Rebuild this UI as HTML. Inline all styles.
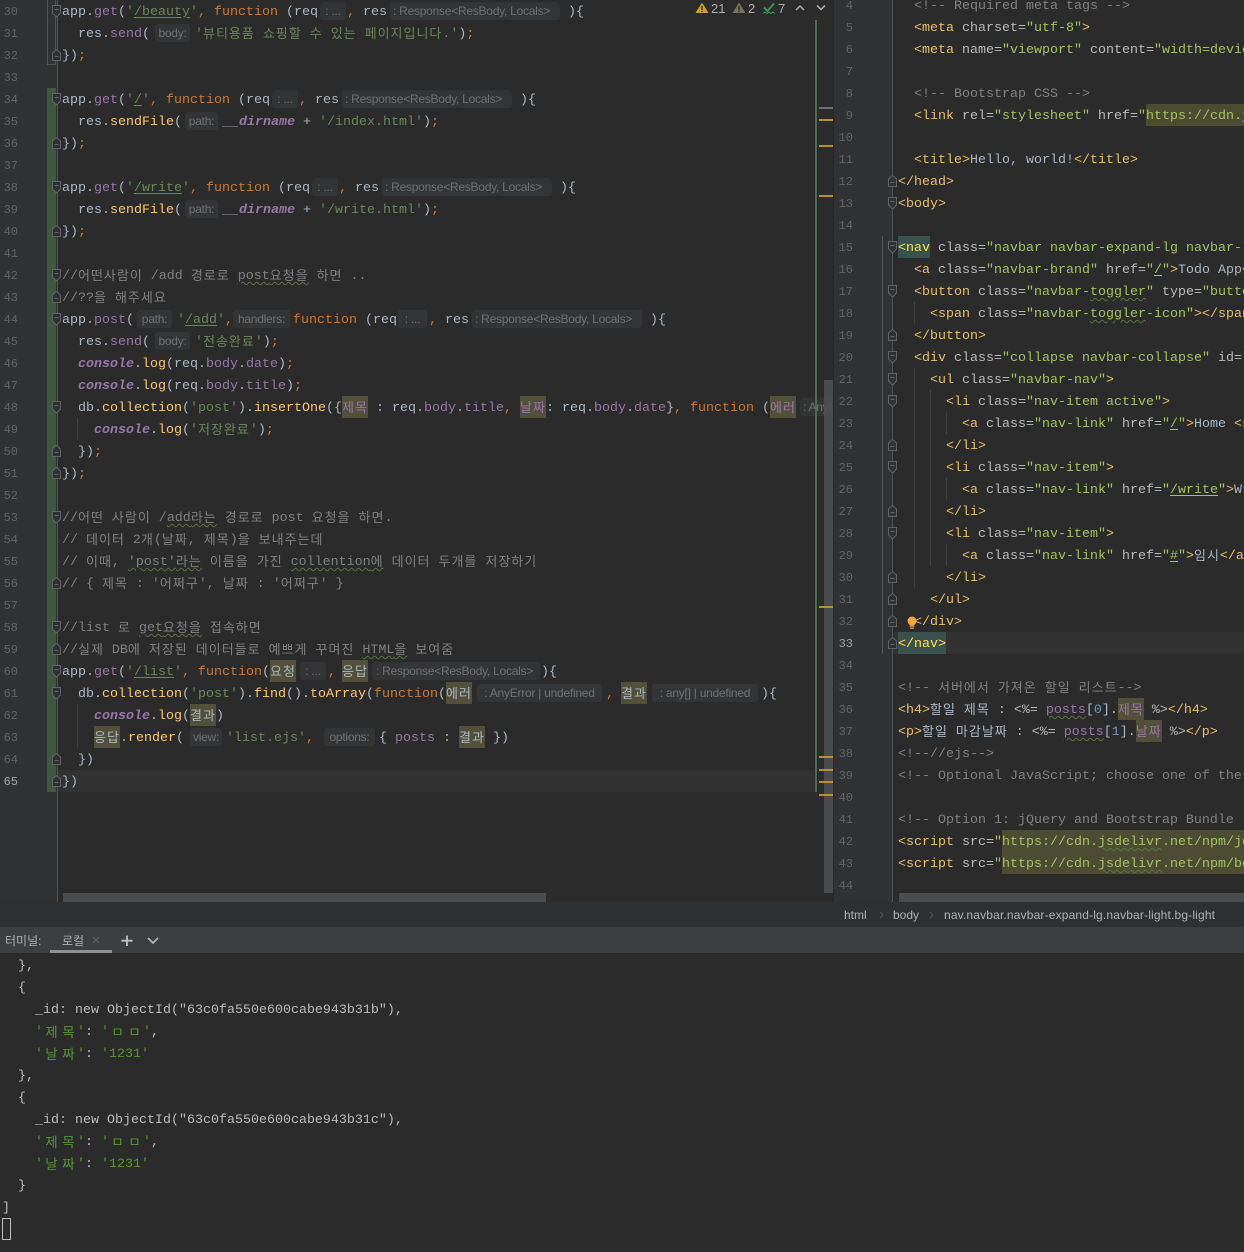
<!DOCTYPE html>
<html lang="ko"><head><meta charset="utf-8"><title>IDE</title>
<style>
html,body{margin:0;padding:0;background:#2b2b2b;width:1244px;height:1252px;overflow:hidden}
#ov{position:absolute;left:0;top:0;z-index:3;pointer-events:none}
.pane{position:absolute;overflow:hidden}
.bg{position:absolute}
.l{position:absolute;white-space:pre;height:22px;line-height:26px;font-family:"Liberation Mono","Noto Sans CJK KR",monospace;font-size:13.334px;color:#a9b7c6}
b{font-weight:normal;font-family:"Noto Sans CJK KR","Liberation Mono",sans-serif;font-size:13px;letter-spacing:1px;line-height:1;position:relative;top:1px}
.o{color:#cc7832}.g{color:#6a8759}.y{color:#ffc66d}.p{color:#9876aa}.v{color:#9876aa;font-style:italic;font-weight:bold}
.c{color:#808080}.t{color:#e8bf6a}.a{color:#bababa}.s{color:#a5c261}.d{color:#6897bb}
.u{text-decoration:underline;text-underline-offset:2px}
.w{text-decoration:underline wavy #5b7340 1px;text-underline-offset:2px}
mark{display:inline-block;width:26px;height:22px;vertical-align:top;background:#52503a;color:inherit;text-align:center}
.url{display:inline-block;height:22px;vertical-align:top;background:#4c4c32}
i.h{display:inline-block;box-sizing:border-box;height:18px;margin-top:2px;vertical-align:top;line-height:18px;background:#323436;border-radius:3px;font:normal 12px/18px "Liberation Sans",sans-serif;color:#6f7173;text-align:center;overflow:hidden;letter-spacing:-.25px}
i.q{width:26px;margin-left:2px;margin-right:1px}
i.r{width:170px;margin-left:3px;margin-right:8px;text-align:left;padding-left:3px}
i.b{width:35px;margin-left:5px;margin-right:5px}
i.f{width:33px;margin-left:3px;margin-right:5px}
.tm{color:#bbbbbb}.tg{color:#5a9432}
.wc{display:inline-block;width:17px;height:13px;line-height:13px;text-align:center;font-family:"Noto Sans CJK KR",sans-serif;font-size:13.5px;vertical-align:-2px}
</style></head><body>

<!-- backgrounds -->
<div class="bg" style="left:0;top:0;width:57px;height:902px;background:#303234"></div>
<div class="bg" style="left:833px;top:0;width:59px;height:902px;background:#303234"></div>
<div class="bg" style="left:57px;top:770px;width:758px;height:22px;background:#323232"></div>
<div class="bg" style="left:893px;top:632px;width:351px;height:22px;background:#323232"></div>
<div class="bg" style="left:47px;top:88px;width:9px;height:704px;background:#3f583f"></div>
<div class="bg" style="left:47px;top:0;width:9px;height:65px;border:1px solid #4a5a48;border-top:0;box-sizing:border-box"></div>
<div class="bg" style="left:0;top:902px;width:1244px;height:25px;background:#2e3133"></div>
<div class="bg" style="left:0;top:927px;width:1244px;height:26px;background:#3c3f41"></div>

<!-- LEFT EDITOR -->
<div class="pane" style="left:0;top:0;width:833px;height:902px">
<div class="l" style="left:62px;top:0">app.<span class="p">get</span>(<span class="g">'<span class="u">/beauty</span>'</span><span class="o">, function </span>(req<i class="h q">: ...</i><span class="o">,</span> res<i class="h r">: Response&lt;ResBody, Locals&gt;</i>){</div>
<div class="l" style="left:78px;top:22px">res.<span class="p">send</span>(<i class="h b">body:</i><span class="g">'<b>뷰티용품</b> <b>쇼핑할</b> <b>수</b> <b>있는</b> <b>페이지입니다</b>.'</span>)<span class="o">;</span></div>
<div class="l" style="left:62px;top:44px">})<span class="o">;</span></div>

<div class="l" style="left:62px;top:88px">app.<span class="p">get</span>(<span class="g">'<span class="u">/</span>'</span><span class="o">, function </span>(req<i class="h q">: ...</i><span class="o">,</span> res<i class="h r">: Response&lt;ResBody, Locals&gt;</i>){</div>
<div class="l" style="left:78px;top:110px">res.<span class="y">sendFile</span>(<i class="h f">path:</i><span class="v">__dirname</span> + <span class="g">'/index.html'</span>)<span class="o">;</span></div>
<div class="l" style="left:62px;top:132px">})<span class="o">;</span></div>

<div class="l" style="left:62px;top:176px">app.<span class="p">get</span>(<span class="g">'<span class="u">/write</span>'</span><span class="o">, function </span>(req<i class="h q">: ...</i><span class="o">,</span> res<i class="h r">: Response&lt;ResBody, Locals&gt;</i>){</div>
<div class="l" style="left:78px;top:198px">res.<span class="y">sendFile</span>(<i class="h f">path:</i><span class="v">__dirname</span> + <span class="g">'/write.html'</span>)<span class="o">;</span></div>
<div class="l" style="left:62px;top:220px">})<span class="o">;</span></div>

<div class="l c" style="left:62px;top:264px">//<b>어떤사람이</b> /add <b>경로로</b> <span class="w">post<b>요청을</b></span> <b>하면</b> ..</div>
<div class="l c" style="left:62px;top:286px">//??<b>을</b> <b>해주세요</b></div>
<div class="l" style="left:62px;top:308px">app.<span class="p">post</span>(<i class="h" style="width:35px;margin-left:3px;margin-right:5px">path:</i><span class="g">'<span class="u">/add</span>'</span><span class="o">,</span><i class="h" style="width:57px;margin-right:3px">handlers:</i><span class="o">function </span>(req<i class="h" style="width:29px;margin-left:1px;margin-right:2px">: ...</i><span class="o">,</span> res<i class="h r">: Response&lt;ResBody, Locals&gt;</i>){</div>
<div class="l" style="left:78px;top:330px">res.<span class="p">send</span>(<i class="h b">body:</i><span class="g">'<b>전송완료</b>'</span>)<span class="o">;</span></div>
<div class="l" style="left:78px;top:352px"><span class="v">console</span>.<span class="y">log</span>(req.<span class="p">body</span>.<span class="p">date</span>)<span class="o">;</span></div>
<div class="l" style="left:78px;top:374px"><span class="v">console</span>.<span class="y">log</span>(req.<span class="p">body</span>.<span class="p">title</span>)<span class="o">;</span></div>
<div class="l" style="left:78px;top:396px">db.<span class="y">collection</span>(<span class="g">'post'</span>).<span class="y">insertOne</span>({<mark class="p"><b>제목</b></mark> : req.<span class="p">body</span>.<span class="p">title</span><span class="o">,</span> <mark class="p"><b>날짜</b></mark>: req.<span class="p">body</span>.<span class="p">date</span>}<span class="o">, function </span>(<mark class="p"><b>에러</b></mark><i class="h" style="width:60px;margin-left:4px;text-align:left;padding-left:3px">: AnyError</i></div>
<div class="l" style="left:94px;top:418px"><span class="v">console</span>.<span class="y">log</span>(<span class="g">'<b>저장완료</b>'</span>)<span class="o">;</span></div>
<div class="l" style="left:78px;top:440px">})<span class="o">;</span></div>
<div class="l" style="left:62px;top:462px">})<span class="o">;</span></div>

<div class="l c" style="left:62px;top:506px">//<b>어떤</b> <b>사람이</b> /<span class="w">add<b>라는</b></span> <b>경로로</b> post <b>요청을</b> <b>하면</b>.</div>
<div class="l c" style="left:62px;top:528px">// <b>데이터</b> 2<b>개</b>(<b>날짜</b>, <b>제목</b>)<b>을</b> <b>보내주는데</b></div>
<div class="l c" style="left:62px;top:550px">// <b>이때</b>, <span class="w">'post'<b>라는</b></span> <b>이름을</b> <b>가진</b> <span class="w">collention<b>에</b></span> <b>데이터</b> <b>두개를</b> <b>저장하기</b></div>
<div class="l c" style="left:62px;top:572px">// { <b>제목</b> : '<b>어쩌구</b>', <b>날짜</b> : '<b>어쩌구</b>' }</div>

<div class="l c" style="left:62px;top:616px">//list <b>로</b> <span class="w">get<b>요청을</b></span> <b>접속하면</b></div>
<div class="l c" style="left:62px;top:638px">//<b>실제</b> DB<b>에</b> <b>저장된</b> <b>데이터들로</b> <b>예쁘게</b> <b>꾸며진</b> <span class="w">HTML<b>을</b></span> <b>보여줌</b></div>
<div class="l" style="left:62px;top:660px">app.<span class="p">get</span>(<span class="g">'<span class="u">/list</span>'</span><span class="o">, function</span>(<mark><b>요청</b></mark><i class="h" style="width:26px;margin-left:4px;margin-right:2px">: ...</i><span class="o">,</span> <mark style="margin-left:-2px"><b>응답</b></mark><i class="h" style="width:168px;margin-left:4px;margin-right:1px;text-align:left;padding-left:4px">: Response&lt;ResBody, Locals&gt;</i>){</div>
<div class="l" style="left:78px;top:682px">db.<span class="y">collection</span>(<span class="g">'post'</span>).<span class="y">find</span>().<span class="y">toArray</span>(<span class="o">function</span>(<mark><b>에러</b></mark><i class="h" style="width:125px;margin-left:5px;margin-right:4px">: AnyError | undefined</i><span class="o">,</span> <mark style="margin-left:-1px"><b>결과</b></mark><i class="h" style="width:106px;margin-left:5px;margin-right:3px">: any[] | undefined</i>){</div>
<div class="l" style="left:94px;top:704px"><span class="v">console</span>.<span class="y">log</span>(<mark><b>결과</b></mark>)</div>
<div class="l" style="left:94px;top:726px"><mark><b>응답</b></mark>.<span class="y">render</span>(<i class="h" style="width:32px;margin-left:6px;margin-right:4px">view:</i><span class="g">'list.ejs'</span><span class="o">,</span><i class="h" style="width:51px;margin-left:10px;margin-right:4px">options:</i>{ <span class="p">posts</span> : <mark><b>결과</b></mark> })</div>
<div class="l" style="left:78px;top:748px">})</div>
<div class="l" style="left:62px;top:770px">})</div>
</div>

<!-- RIGHT EDITOR -->
<div class="pane" style="left:0;top:0;width:1244px;height:893px">
<div class="l c" style="left:914px;top:-6px">&lt;!-- Required meta tags --&gt;</div>
<div class="l" style="left:914px;top:16px"><span class="t">&lt;meta</span> <span class="a">charset=</span><span class="s">"utf-8"</span><span class="t">&gt;</span></div>
<div class="l" style="left:914px;top:38px"><span class="t">&lt;meta</span> <span class="a">name=</span><span class="s">"viewport"</span> <span class="a">content=</span><span class="s">"width=device-width, initial-scale=1"</span><span class="t">&gt;</span></div>
<div class="l c" style="left:914px;top:82px">&lt;!-- Bootstrap CSS --&gt;</div>
<div class="l" style="left:914px;top:104px"><span class="t">&lt;link</span> <span class="a">rel=</span><span class="s">"stylesheet"</span> <span class="a">href=</span><span class="s">"<span class="url">https://cdn.jsdelivr.net/npm/bootstrap</span></span></div>
<div class="l" style="left:914px;top:148px"><span class="t">&lt;title&gt;</span>Hello, world!<span class="t">&lt;/title&gt;</span></div>
<div class="l t" style="left:898px;top:170px">&lt;/head&gt;</div>
<div class="l t" style="left:898px;top:192px">&lt;body&gt;</div>
<div class="l" style="left:898px;top:236px"><span class="t" style="display:inline-block;height:22px;vertical-align:top;background:#3b514d;color:#ffe24d">&lt;nav</span> <span class="a">class=</span><span class="s">"navbar navbar-expand-lg navbar-light bg-light"</span><span class="t">&gt;</span></div>
<div class="l" style="left:914px;top:258px"><span class="t">&lt;a</span> <span class="a">class=</span><span class="s">"navbar-brand"</span> <span class="a">href=</span><span class="s">"<span class="u">/</span>"</span><span class="t">&gt;</span>Todo App<span class="t">&lt;/a&gt;</span></div>
<div class="l" style="left:914px;top:280px"><span class="t">&lt;button</span> <span class="a">class=</span><span class="s">"navbar-<span class="w">toggler</span>"</span> <span class="a">type=</span><span class="s">"button"</span> <span class="a">data-toggle=</span><span class="s">"collapse"</span></div>
<div class="l" style="left:930px;top:302px"><span class="t">&lt;span</span> <span class="a">class=</span><span class="s">"navbar-<span class="w">toggler</span>-icon"</span><span class="t">&gt;&lt;/span&gt;</span></div>
<div class="l t" style="left:914px;top:324px">&lt;/button&gt;</div>
<div class="l" style="left:914px;top:346px"><span class="t">&lt;div</span> <span class="a">class=</span><span class="s">"collapse navbar-collapse"</span> <span class="a">id=</span><span class="s">"navbarSupportedContent"</span><span class="t">&gt;</span></div>
<div class="l" style="left:930px;top:368px"><span class="t">&lt;ul</span> <span class="a">class=</span><span class="s">"navbar-nav"</span><span class="t">&gt;</span></div>
<div class="l" style="left:946px;top:390px"><span class="t">&lt;li</span> <span class="a">class=</span><span class="s">"nav-item active"</span><span class="t">&gt;</span></div>
<div class="l" style="left:962px;top:412px"><span class="t">&lt;a</span> <span class="a">class=</span><span class="s">"nav-link"</span> <span class="a">href=</span><span class="s">"<span class="u">/</span>"</span><span class="t">&gt;</span>Home <span class="t">&lt;span</span> <span class="a">class=</span><span class="s">"sr-only"</span><span class="t">&gt;</span></div>
<div class="l t" style="left:946px;top:434px">&lt;/li&gt;</div>
<div class="l" style="left:946px;top:456px"><span class="t">&lt;li</span> <span class="a">class=</span><span class="s">"nav-item"</span><span class="t">&gt;</span></div>
<div class="l" style="left:962px;top:478px"><span class="t">&lt;a</span> <span class="a">class=</span><span class="s">"nav-link"</span> <span class="a">href=</span><span class="s">"<span class="u">/write</span>"</span><span class="t">&gt;</span>Write<span class="t">&lt;/a&gt;</span></div>
<div class="l t" style="left:946px;top:500px">&lt;/li&gt;</div>
<div class="l" style="left:946px;top:522px"><span class="t">&lt;li</span> <span class="a">class=</span><span class="s">"nav-item"</span><span class="t">&gt;</span></div>
<div class="l" style="left:962px;top:544px"><span class="t">&lt;a</span> <span class="a">class=</span><span class="s">"nav-link"</span> <span class="a">href=</span><span class="s">"<span class="u">#</span>"</span><span class="t">&gt;</span><b>임시</b><span class="t">&lt;/a&gt;</span></div>
<div class="l t" style="left:946px;top:566px">&lt;/li&gt;</div>
<div class="l t" style="left:930px;top:588px">&lt;/ul&gt;</div>
<div class="l t" style="left:914px;top:610px">&lt;/div&gt;</div>
<div class="l t" style="left:898px;top:632px"><span style="display:inline-block;height:22px;vertical-align:top;background:#3b514d;color:#ffe24d">&lt;/nav&gt;</span></div>
<div class="l c" style="left:898px;top:676px">&lt;!-- <b>서버에서</b> <b>가져온</b> <b>할일</b> <b>리스트</b>--&gt;</div>
<div class="l" style="left:898px;top:698px"><span class="t">&lt;h4&gt;</span><b>할일</b> <b>제목</b> : <span class="a">&lt;%=</span> <span class="p w">posts</span>[<span class="d">0</span>].<mark class="p"><b>제목</b></mark> <span class="a">%&gt;</span><span class="t">&lt;/h4&gt;</span></div>
<div class="l" style="left:898px;top:720px"><span class="t">&lt;p&gt;</span><b>할일</b> <b>마감날짜</b> : <span class="a">&lt;%=</span> <span class="p w">posts</span>[<span class="d">1</span>].<mark class="p"><b>날짜</b></mark> <span class="a">%&gt;</span><span class="t">&lt;/p&gt;</span></div>
<div class="l c" style="left:898px;top:742px">&lt;!--//ejs--&gt;</div>
<div class="l c" style="left:898px;top:764px">&lt;!-- Optional JavaScript; choose one of the two! --&gt;</div>
<div class="l c" style="left:898px;top:808px">&lt;!-- Option 1: jQuery and Bootstrap Bundle (includes Popper) --&gt;</div>
<div class="l" style="left:898px;top:830px"><span class="t">&lt;script</span> <span class="a">src=</span><span class="s">"<span class="url">https://cdn.<span class="w">jsdelivr</span>.net/npm/jquery@3.5.1/dist</span></span></div>
<div class="l" style="left:898px;top:852px"><span class="t">&lt;script</span> <span class="a">src=</span><span class="s">"<span class="url">https://cdn.<span class="w">jsdelivr</span>.net/npm/bootstrap@4.5.3/dist</span></span></div>
</div>

<!-- TERMINAL -->
<div class="l tm" style="left:18px;top:954px">},</div>
<div class="l tm" style="left:18px;top:976px">{</div>
<div class="l tm" style="left:35px;top:998px">_id: new ObjectId("63c0fa550e600cabe943b31b"),</div>
<div class="l tm" style="left:35px;top:1020px"><span class="tg">'<span class="wc">제</span><span class="wc">목</span>'</span>: <span class="tg">'<span class="wc">ㅁ</span><span class="wc">ㅁ</span>'</span>,</div>
<div class="l tm" style="left:35px;top:1042px"><span class="tg">'<span class="wc">날</span><span class="wc">짜</span>'</span>: <span class="tg">'1231'</span></div>
<div class="l tm" style="left:18px;top:1064px">},</div>
<div class="l tm" style="left:18px;top:1086px">{</div>
<div class="l tm" style="left:35px;top:1108px">_id: new ObjectId("63c0fa550e600cabe943b31c"),</div>
<div class="l tm" style="left:35px;top:1130px"><span class="tg">'<span class="wc">제</span><span class="wc">목</span>'</span>: <span class="tg">'<span class="wc">ㅁ</span><span class="wc">ㅁ</span>'</span>,</div>
<div class="l tm" style="left:35px;top:1152px"><span class="tg">'<span class="wc">날</span><span class="wc">짜</span>'</span>: <span class="tg">'1231'</span></div>
<div class="l tm" style="left:18px;top:1174px">}</div>
<div class="l tm" style="left:2px;top:1196px">]</div>
<div class="bg" style="left:2px;top:1218px;border:1px solid #bbbbbb;box-sizing:content-box;width:7px;height:20px"></div>

<!-- overlay: gutters, icons, scrollbars -->
<svg id="ov" width="1244" height="1252" viewBox="0 0 1244 1252" xmlns="http://www.w3.org/2000/svg">
<defs>
<g id="o"><path d="M0.5 0.5H8.5V8L4.5 12L0.5 8Z" fill="#2f3133" stroke="#606366"/><path d="M2.5 4.5H6.5" stroke="#606366"/></g>
<g id="x"><path d="M0.5 11.5H8.5V4L4.5 0.5L0.5 4Z" fill="#2f3133" stroke="#606366"/><path d="M2.5 7.5H6.5" stroke="#606366"/></g>
</defs>
<!-- fold lines -->
<rect x="57" y="0" width="1" height="902" fill="#505254"/>
<rect x="892" y="0" width="1" height="902" fill="#505254"/>
<rect x="833" y="0" width="1" height="902" fill="#262829"/>
<!-- guides -->
<g fill="#3d3f41">
<rect x="77" y="418" width="1" height="22"/><rect x="77" y="704" width="1" height="44"/>
<rect x="914" y="302" width="1" height="22"/><rect x="914" y="368" width="1" height="220"/>
<rect x="930" y="390" width="1" height="176"/>
<rect x="946" y="412" width="1" height="22"/><rect x="946" y="478" width="1" height="22"/><rect x="946" y="544" width="1" height="22"/>
</g>
<rect x="882" y="236" width="1" height="418" fill="#55585a"/>
<!-- fold icons left -->
<use href="#o" x="52" y="5"/><use href="#x" x="52" y="49"/><use href="#o" x="52" y="93"/><use href="#x" x="52" y="137"/><use href="#o" x="52" y="181"/><use href="#x" x="52" y="225"/><use href="#o" x="52" y="269"/><use href="#x" x="52" y="291"/><use href="#o" x="52" y="313"/><use href="#o" x="52" y="401"/><use href="#x" x="52" y="445"/><use href="#x" x="52" y="467"/><use href="#o" x="52" y="511"/><use href="#x" x="52" y="577"/><use href="#o" x="52" y="621"/><use href="#x" x="52" y="643"/><use href="#o" x="52" y="665"/><use href="#o" x="52" y="687"/><use href="#x" x="52" y="753"/><use href="#x" x="52" y="775"/>
<!-- fold icons right -->
<use href="#x" x="888" y="175"/><use href="#o" x="888" y="197"/><use href="#o" x="888" y="241"/><use href="#o" x="888" y="285"/><use href="#x" x="888" y="329"/><use href="#o" x="888" y="351"/><use href="#o" x="888" y="373"/><use href="#o" x="888" y="395"/><use href="#x" x="888" y="439"/><use href="#o" x="888" y="461"/><use href="#x" x="888" y="505"/><use href="#o" x="888" y="527"/><use href="#x" x="888" y="571"/><use href="#x" x="888" y="593"/><use href="#x" x="888" y="615"/><use href="#x" x="888" y="637"/>
<!-- line numbers left -->
<g font-family="Liberation Mono, monospace" font-size="12" fill="#606366" text-anchor="end">
<text x="18" y="15">30</text><text x="18" y="37">31</text><text x="18" y="59">32</text><text x="18" y="81">33</text><text x="18" y="103">34</text><text x="18" y="125">35</text><text x="18" y="147">36</text><text x="18" y="169">37</text><text x="18" y="191">38</text><text x="18" y="213">39</text><text x="18" y="235">40</text><text x="18" y="257">41</text><text x="18" y="279">42</text><text x="18" y="301">43</text><text x="18" y="323">44</text><text x="18" y="345">45</text><text x="18" y="367">46</text><text x="18" y="389">47</text><text x="18" y="411">48</text><text x="18" y="433">49</text><text x="18" y="455">50</text><text x="18" y="477">51</text><text x="18" y="499">52</text><text x="18" y="521">53</text><text x="18" y="543">54</text><text x="18" y="565">55</text><text x="18" y="587">56</text><text x="18" y="609">57</text><text x="18" y="631">58</text><text x="18" y="653">59</text><text x="18" y="675">60</text><text x="18" y="697">61</text><text x="18" y="719">62</text><text x="18" y="741">63</text><text x="18" y="763">64</text><text x="18" y="785" fill="#a4a3a3">65</text>
<!-- line numbers right -->
<text x="853" y="9">4</text><text x="853" y="31">5</text><text x="853" y="53">6</text><text x="853" y="75">7</text><text x="853" y="97">8</text><text x="853" y="119">9</text><text x="853" y="141">10</text><text x="853" y="163">11</text><text x="853" y="185">12</text><text x="853" y="207">13</text><text x="853" y="229">14</text><text x="853" y="251">15</text><text x="853" y="273">16</text><text x="853" y="295">17</text><text x="853" y="317">18</text><text x="853" y="339">19</text><text x="853" y="361">20</text><text x="853" y="383">21</text><text x="853" y="405">22</text><text x="853" y="427">23</text><text x="853" y="449">24</text><text x="853" y="471">25</text><text x="853" y="493">26</text><text x="853" y="515">27</text><text x="853" y="537">28</text><text x="853" y="559">29</text><text x="853" y="581">30</text><text x="853" y="603">31</text><text x="853" y="625">32</text><text x="853" y="647" fill="#a4a3a3">33</text><text x="853" y="669">34</text><text x="853" y="691">35</text><text x="853" y="713">36</text><text x="853" y="735">37</text><text x="853" y="757">38</text><text x="853" y="779">39</text><text x="853" y="801">40</text><text x="853" y="823">41</text><text x="853" y="845">42</text><text x="853" y="867">43</text><text x="853" y="889">44</text>
</g>
<!-- minimap / scrollbars -->
<rect x="815" y="20" width="2" height="772" fill="#4b6a52"/>
<rect x="824" y="380" width="9" height="513" fill="#4e4f50" fill-opacity=".9"/>
<g fill="#b5912f">
<rect x="819" y="119" width="14" height="2"/><rect x="819" y="145" width="14" height="2"/><rect x="819" y="195" width="14" height="2"/><rect x="819" y="606" width="14" height="2"/><rect x="819" y="756" width="14" height="2"/><rect x="819" y="769" width="14" height="2"/><rect x="819" y="781" width="14" height="2"/><rect x="819" y="794" width="14" height="2"/>
</g>
<rect x="819" y="107" width="14" height="2" fill="#6f6f6f"/>
<rect x="63" y="893" width="483" height="9" fill="#4a4c4e"/>
<rect x="899" y="893" width="345" height="9" fill="#4a4c4e"/>
<!-- inspection widget -->
<path d="M702 2.5L708.5 13H695.5Z" fill="#c9a02f"/><rect x="701.3" y="6" width="1.4" height="4" fill="#2b2b2b"/><rect x="701.3" y="10.7" width="1.4" height="1.4" fill="#2b2b2b"/>
<path d="M739 2.5L745.5 13H732.5Z" fill="#73735f"/><rect x="738.3" y="6" width="1.4" height="4" fill="#2b2b2b"/><rect x="738.3" y="10.7" width="1.4" height="1.4" fill="#2b2b2b"/>
<path d="M764 7.5L767.5 11L774 3.5" fill="none" stroke="#3f9150" stroke-width="2"/><path d="M763 13.5l2-1.5 2 1.5 2-1.5 2 1.5 2-1.5 2 1.5" fill="none" stroke="#3f9150" stroke-width="1"/>
<g font-family="Liberation Sans, sans-serif" font-size="13" fill="#a9abad"><text x="711" y="13">21</text><text x="748" y="13">2</text><text x="778" y="13">7</text></g>
<path d="M796 10L800 6L804 10" fill="none" stroke="#afb1b3" stroke-width="1.5"/>
<path d="M817 5.5L821 9.5L825 5.5" fill="none" stroke="#afb1b3" stroke-width="1.5"/>
<!-- bulb -->
<circle cx="912" cy="621" r="4.5" fill="#f2a93b"/><rect x="909.5" y="625.5" width="5" height="1.2" fill="#f2a93b"/><rect x="910" y="627.5" width="4" height="1.2" fill="#f2a93b"/>
<!-- breadcrumb -->
<g font-family="Liberation Sans, sans-serif" font-size="12" fill="#afb1b3"><text x="844" y="919">html</text><text x="893" y="919">body</text><text x="944" y="919" textLength="271">nav.navbar.navbar-expand-lg.navbar-light.bg-light</text></g>
<path d="M880 912l3 3-3 3M930 912l3 3-3 3" fill="none" stroke="#55585a"/>
<!-- terminal header -->
<g font-family="Liberation Sans, 'Noto Sans CJK KR', sans-serif" font-size="12" fill="#afb1b3"><text x="5" y="945">터미널:</text><text x="62" y="945">로컬</text></g>
<path d="M93 937l6 6M99 937l-6 6" stroke="#5f6264" stroke-width="1.2"/>
<rect x="50" y="950" width="62" height="3" fill="#8e9092"/>
<path d="M127 935.5V946M121.5 940.7H132.5" stroke="#c0c2c4" stroke-width="1.8" fill="none"/>
<path d="M148 938L153 943L158 938" stroke="#afb1b3" stroke-width="1.8" fill="none"/>
</svg>
</body></html>
